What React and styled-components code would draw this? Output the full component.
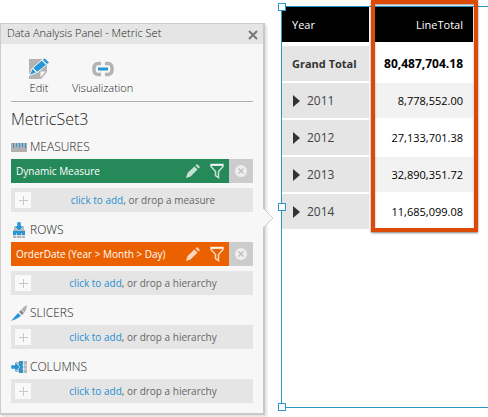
import React from 'react';
import styled, { createGlobalStyle } from 'styled-components';

const GlobalStyle = createGlobalStyle`
  *, *::before, *::after { box-sizing: border-box; }
  body {
    margin: 0;
    background: #fff;
    color: #222;
    font: 12px/16px "Open Sans", "Noto Sans", sans-serif;
  }
  button { font: inherit; color: inherit; border: 0; padding: 0; margin: 0; background: none; cursor: pointer; }
  svg { display: block; flex: none; }
`;

const Page = styled.main`
  display: flex;
  align-items: stretch;
  gap: 16px;
  min-height: 100vh;
  padding-top: 6px;
`;

const Panel = styled.aside`
  position: relative;
  align-self: flex-start;
  flex: 0 0 265px;
  margin-top: 17px;
  border: 1px solid #ccc;
  border-right: 2px solid #c9c9c9;
  border-bottom: 2px solid #c9c9c9;
  background: #f7f7f7;
  box-shadow: 2px 2px 2px rgba(0, 0, 0, 0.12);
`;

const PanelHeader = styled.header`
  display: flex;
  align-items: center;
  justify-content: space-between;
  height: 20px;
  padding: 0 5px 2px 6px;
  background: #e5e5e5;
`;

const PanelTitle = styled.h1`
  margin: 0;
  font-size: 11px;
  font-weight: 300;
  line-height: 16px;
`;

const CloseButton = styled.button`
  padding-top: 3px;
`;

const Callout = styled.svg`
  position: absolute;
  top: 184px;
  right: -11px;
`;

const PanelBody = styled.div`
  padding: 0 10px 10px;
`;

const Toolbar = styled.div`
  display: flex;
  align-items: flex-start;
  gap: 22px;
  height: 58px;
  padding: 14px 0 0 17px;
  border-bottom: 1px solid #b0b0b0;
`;

const ToolButton = styled.button`
  display: flex;
  flex-direction: column;
  align-items: center;
  font-size: 11px;
  font-weight: 300;
  line-height: 16px;
`;

const SetName = styled.h2`
  margin: 0;
  padding-top: 5px;
  height: 27px;
  font-size: 16px;
  font-weight: 300;
  line-height: 24px;
`;

const SectionTitle = styled.h3`
  display: flex;
  align-items: center;
  gap: 3px;
  height: 30px;
  margin: 0;
  padding-top: 6px;
  font-size: 12px;
  font-weight: 300;
`;

const Chip = styled.div`
  display: flex;
  align-items: center;
  height: 24px;
  margin-bottom: 5px;
  background: ${(p) => p.$color};
  color: #fff;
  font-size: 10px;
  font-weight: 500;
`;

const ChipLabel = styled.span`
  flex: 1;
  padding-left: 5px;
  white-space: nowrap;
`;

const ChipAction = styled.button`
  display: grid;
  place-items: center;
  width: 24px;
  height: 24px;
  color: rgba(255, 255, 255, 0.75);
`;

const RemoveButton = styled(ChipAction)`
  background: #ccc;
`;

const DropZone = styled.div`
  display: flex;
  align-items: center;
  height: 24px;
  padding: 0 4px;
  background: #e5e5e5;
  color: #666;
  font-size: 10px;
`;

const AddButton = styled.button`
  display: grid;
  place-items: center;
  width: 16px;
  height: 16px;
  background: #f9f9f9;
`;

const DropHint = styled.span`
  flex: 1;
  padding-left: 6px;
  text-align: center;
  white-space: nowrap;
`;

const HintLink = styled.a`
  color: #2a8fd2;
  text-decoration: none;
`;

const Canvas = styled.section`
  position: relative;
  flex: 1;
  min-width: 0;
  margin-bottom: 9px;
  border: 1px solid #2996cc;
  border-right: 0;
`;

const Handle = styled.span`
  position: absolute;
  left: -4px;
  top: ${(p) => p.$top};
  width: 8px;
  height: 8px;
  margin-top: -4px;
  border: 1px solid #2996cc;
  background: #fff;
`;

const TableArea = styled.div`
  position: relative;
  width: 191px;
`;

const Highlight = styled.div`
  position: absolute;
  inset: -7px -5px -1px 89px;
  border: 4px solid #dc4a05;
  box-shadow: 0 1px 2px rgba(0, 0, 0, 0.5), inset 0 1px 2px rgba(0, 0, 0, 0.4);
  pointer-events: none;
`;

const Table = styled.table`
  width: 100%;
  border-collapse: separate;
  border-spacing: 0;
`;

const ColumnHead = styled.th`
  height: 39px;
  padding: 0 10px;
  border-bottom: 4px solid #fff;
  background: #000;
  color: #fff;
  font-size: 11px;
  font-weight: 400;
  text-align: ${(p) => (p.$numeric ? 'right' : 'left')};
  border-left: ${(p) => (p.$numeric ? '4px solid #fff' : '0')};
`;

const RowHead = styled.th`
  width: 87px;
  height: 37px;
  padding: 0 0 0 10px;
  border-bottom: 2px solid #fff;
  background: #e5e5e5;
  color: ${(p) => (p.$total ? '#333' : '#444')};
  font-size: ${(p) => (p.$total ? '11px' : '12px')};
  font-weight: ${(p) => (p.$total ? 700 : 400)};
  text-align: left;
  white-space: nowrap;
`;

const Value = styled.td`
  padding: 0 10px 0 0;
  border-left: 4px solid #fff;
  border-bottom: 2px solid #fff;
  background: ${(p) => (p.$shaded ? '#f2f2f2' : '#fff')};
  color: #000;
  font-size: ${(p) => (p.$total ? '12px' : '11px')};
  font-weight: ${(p) => (p.$total ? 700 : 400)};
  text-align: right;
`;

const Expander = styled.button`
  display: flex;
  align-items: center;
  gap: 7px;
  padding-left: 1px;
`;

const EditIcon = () => (
  <svg width="22" height="22" viewBox="0 0 22 22">
    <path d="M1 1h18v13l-6 7H1z" fill="#b3b3b3" />
    <path d="M12.500 19.500v-6h5z" fill="#f7f7f7" />
    <path d="M1 17.500L4.500 10 16.500 0l5 4.500L9 14.500z" fill="#2996d4" stroke="#f7f7f7" strokeWidth="1" />
    <path d="M14 2l4.500 4.500M4.500 10l4.500 4.500" stroke="#f7f7f7" strokeWidth="1.200" />
  </svg>
);

const LinkIcon = () => (
  <svg width="22" height="22" viewBox="0 0 22 22" fill="none">
    <path d="M9 5.500H6a4 4 0 0 0-4 4v3a4 4 0 0 0 4 4h3M13 5.500h3a4 4 0 0 1 4 4v3a4 4 0 0 1-4 4h-3" stroke="#b3b3b3" strokeWidth="3.500" />
    <path d="M5 11h12" stroke="#f7f7f7" strokeWidth="5" />
    <path d="M6 11h10" stroke="#2996d4" strokeWidth="3" />
  </svg>
);

const CloseIcon = () => (
  <svg width="10" height="10" viewBox="0 0 10 10">
    <path d="M1 1l8 8M9 1l-8 8" stroke="#777" strokeWidth="2" />
  </svg>
);

const PencilIcon = () => (
  <svg width="16" height="16" viewBox="0 0 16 16" fill="currentColor">
    <path d="M1 15l1.500-5L9.500 3.500l3 3L5.500 13.500zM10.500 2.500L12 1l3 3-1.500 1.500z" />
  </svg>
);

const FunnelIcon = () => (
  <svg width="16" height="16" viewBox="0 0 16 16" fill="none" stroke="currentColor">
    <path d="M2 1.500h12v2L9.500 8.500v6L6.500 12.500v-4L2 3.500z" strokeWidth="1.500" />
    <path d="M2 2h12" strokeWidth="2" />
  </svg>
);

const RemoveIcon = () => (
  <svg width="12" height="12" viewBox="0 0 12 12">
    <circle cx="6" cy="6" r="6" fill="#eee" />
    <path d="M3.500 3.500l5 5M8.500 3.500l-5 5" stroke="#bbb" strokeWidth="1.200" />
  </svg>
);

const PlusIcon = () => (
  <svg width="10" height="10" viewBox="0 0 10 10">
    <path d="M5.500 1v9M1 5.500h9" stroke="#c8c8c8" />
  </svg>
);

const RulerIcon = () => (
  <svg width="16" height="16" viewBox="0 0 16 16">
    <path d="M0 4h16v9H0z" fill="#b0b0b0" />
    <path d="M2.500 4v5M5.500 4v4M8.500 4v5M11.500 4v4M14.500 4v5" stroke="#2996d4" />
  </svg>
);

const RowsIcon = () => (
  <svg width="16" height="16" viewBox="0 0 16 16">
    <path d="M3 5h10v3h1v8H2V8h1z" fill="#b8b8b8" />
    <path d="M2 9h12v4H2z" fill="#2996d4" />
    <path d="M2 13.500h12M5.500 11v5M10.500 11v5" stroke="#f7f7f7" strokeOpacity=".6" />
    <path d="M6 0h4v4h3l-5 5-5-5h3z" fill="#2996d4" stroke="#f7f7f7" strokeWidth=".5" />
  </svg>
);

const SlicerIcon = () => (
  <svg width="16" height="16" viewBox="0 0 16 16">
    <path d="M0 16l7-8 3 3q-4 3-10 5z" fill="#2996d4" />
    <path d="M8 7l2-2 3 3-2 2z" fill="#888" />
    <path d="M10.500 4.500Q13 1 16 0q0 4-2.500 7.500z" fill="#b0b0b0" />
  </svg>
);

const ColumnsIcon = () => (
  <svg width="16" height="16" viewBox="0 0 16 16">
    <path d="M4 3h4V2h8v12H8v-1H4z" fill="#b8b8b8" />
    <path d="M8 2h4v12H8z" fill="#2996d4" />
    <path d="M12.500 2v12M11 6h5M11 10h5" stroke="#f7f7f7" strokeOpacity=".6" />
    <path d="M0 6h4V3l5 5-5 5v-3H0z" fill="#2996d4" stroke="#f7f7f7" strokeWidth=".5" />
  </svg>
);

const Triangle = () => (
  <svg width="7" height="12" viewBox="0 0 7 12">
    <path d="M0 0l7 6-7 6z" fill="#333" />
  </svg>
);

const sections = [
  { title: 'MEASURES', Icon: RulerIcon, target: 'measure', chip: 'Dynamic Measure', color: '#26895a' },
  { title: 'ROWS', Icon: RowsIcon, target: 'hierarchy', chip: 'OrderDate (Year > Month > Day)', color: '#eb6100' },
  { title: 'SLICERS', Icon: SlicerIcon, target: 'hierarchy' },
  { title: 'COLUMNS', Icon: ColumnsIcon, target: 'hierarchy' },
];

const years = [
  ['2011', '8,778,552.00'],
  ['2012', '27,133,701.38'],
  ['2013', '32,890,351.72'],
  ['2014', '11,685,099.08'],
];

function Section({ title, Icon, target, chip, color }) {
  return (
    <section>
      <SectionTitle><Icon />{title}</SectionTitle>
      {chip && (
        <Chip $color={color}>
          <ChipLabel>{chip}</ChipLabel>
          <ChipAction aria-label={`Edit ${chip}`}><PencilIcon /></ChipAction>
          <ChipAction aria-label={`Filter ${chip}`}><FunnelIcon /></ChipAction>
          <RemoveButton aria-label={`Remove ${chip}`}><RemoveIcon /></RemoveButton>
        </Chip>
      )}
      <DropZone>
        <AddButton aria-label={`Add ${target}`}><PlusIcon /></AddButton>
        <DropHint><HintLink href="#add">click to add</HintLink>, or drop a {target}</DropHint>
      </DropZone>
    </section>
  );
}

export default function App() {
  return (
    <>
      <GlobalStyle />
      <Page>
        <Panel>
          <PanelHeader>
            <PanelTitle>Data Analysis Panel - Metric Set</PanelTitle>
            <CloseButton aria-label="Close"><CloseIcon /></CloseButton>
          </PanelHeader>
          <PanelBody>
            <Toolbar>
              <ToolButton><EditIcon />Edit</ToolButton>
              <ToolButton><LinkIcon />Visualization</ToolButton>
            </Toolbar>
            <SetName>MetricSet3</SetName>
            {sections.map((s) => <Section key={s.title} {...s} />)}
          </PanelBody>
          <Callout width="12" height="20" viewBox="0 0 12 20">
            <path d="M0 1h2l9 9-9 9H0z" fill="#f7f7f7" />
            <path d="M2 1l9 9-9 9" fill="none" stroke="#ccc" />
          </Callout>
        </Panel>
        <Canvas>
          <TableArea>
            <Table>
              <thead>
                <tr>
                  <ColumnHead scope="col">Year</ColumnHead>
                  <ColumnHead scope="col" $numeric>LineTotal</ColumnHead>
                </tr>
              </thead>
              <tbody>
                <tr>
                  <RowHead scope="row" $total>Grand Total</RowHead>
                  <Value $total>80,487,704.18</Value>
                </tr>
                {years.map(([year, total], i) => (
                  <tr key={year}>
                    <RowHead scope="row"><Expander><Triangle />{year}</Expander></RowHead>
                    <Value $shaded={i % 2 === 0}>{total}</Value>
                  </tr>
                ))}
              </tbody>
            </Table>
            <Highlight />
          </TableArea>
          <Handle $top="0" />
          <Handle $top="50%" />
          <Handle $top="100%" />
        </Canvas>
      </Page>
    </>
  );
}
